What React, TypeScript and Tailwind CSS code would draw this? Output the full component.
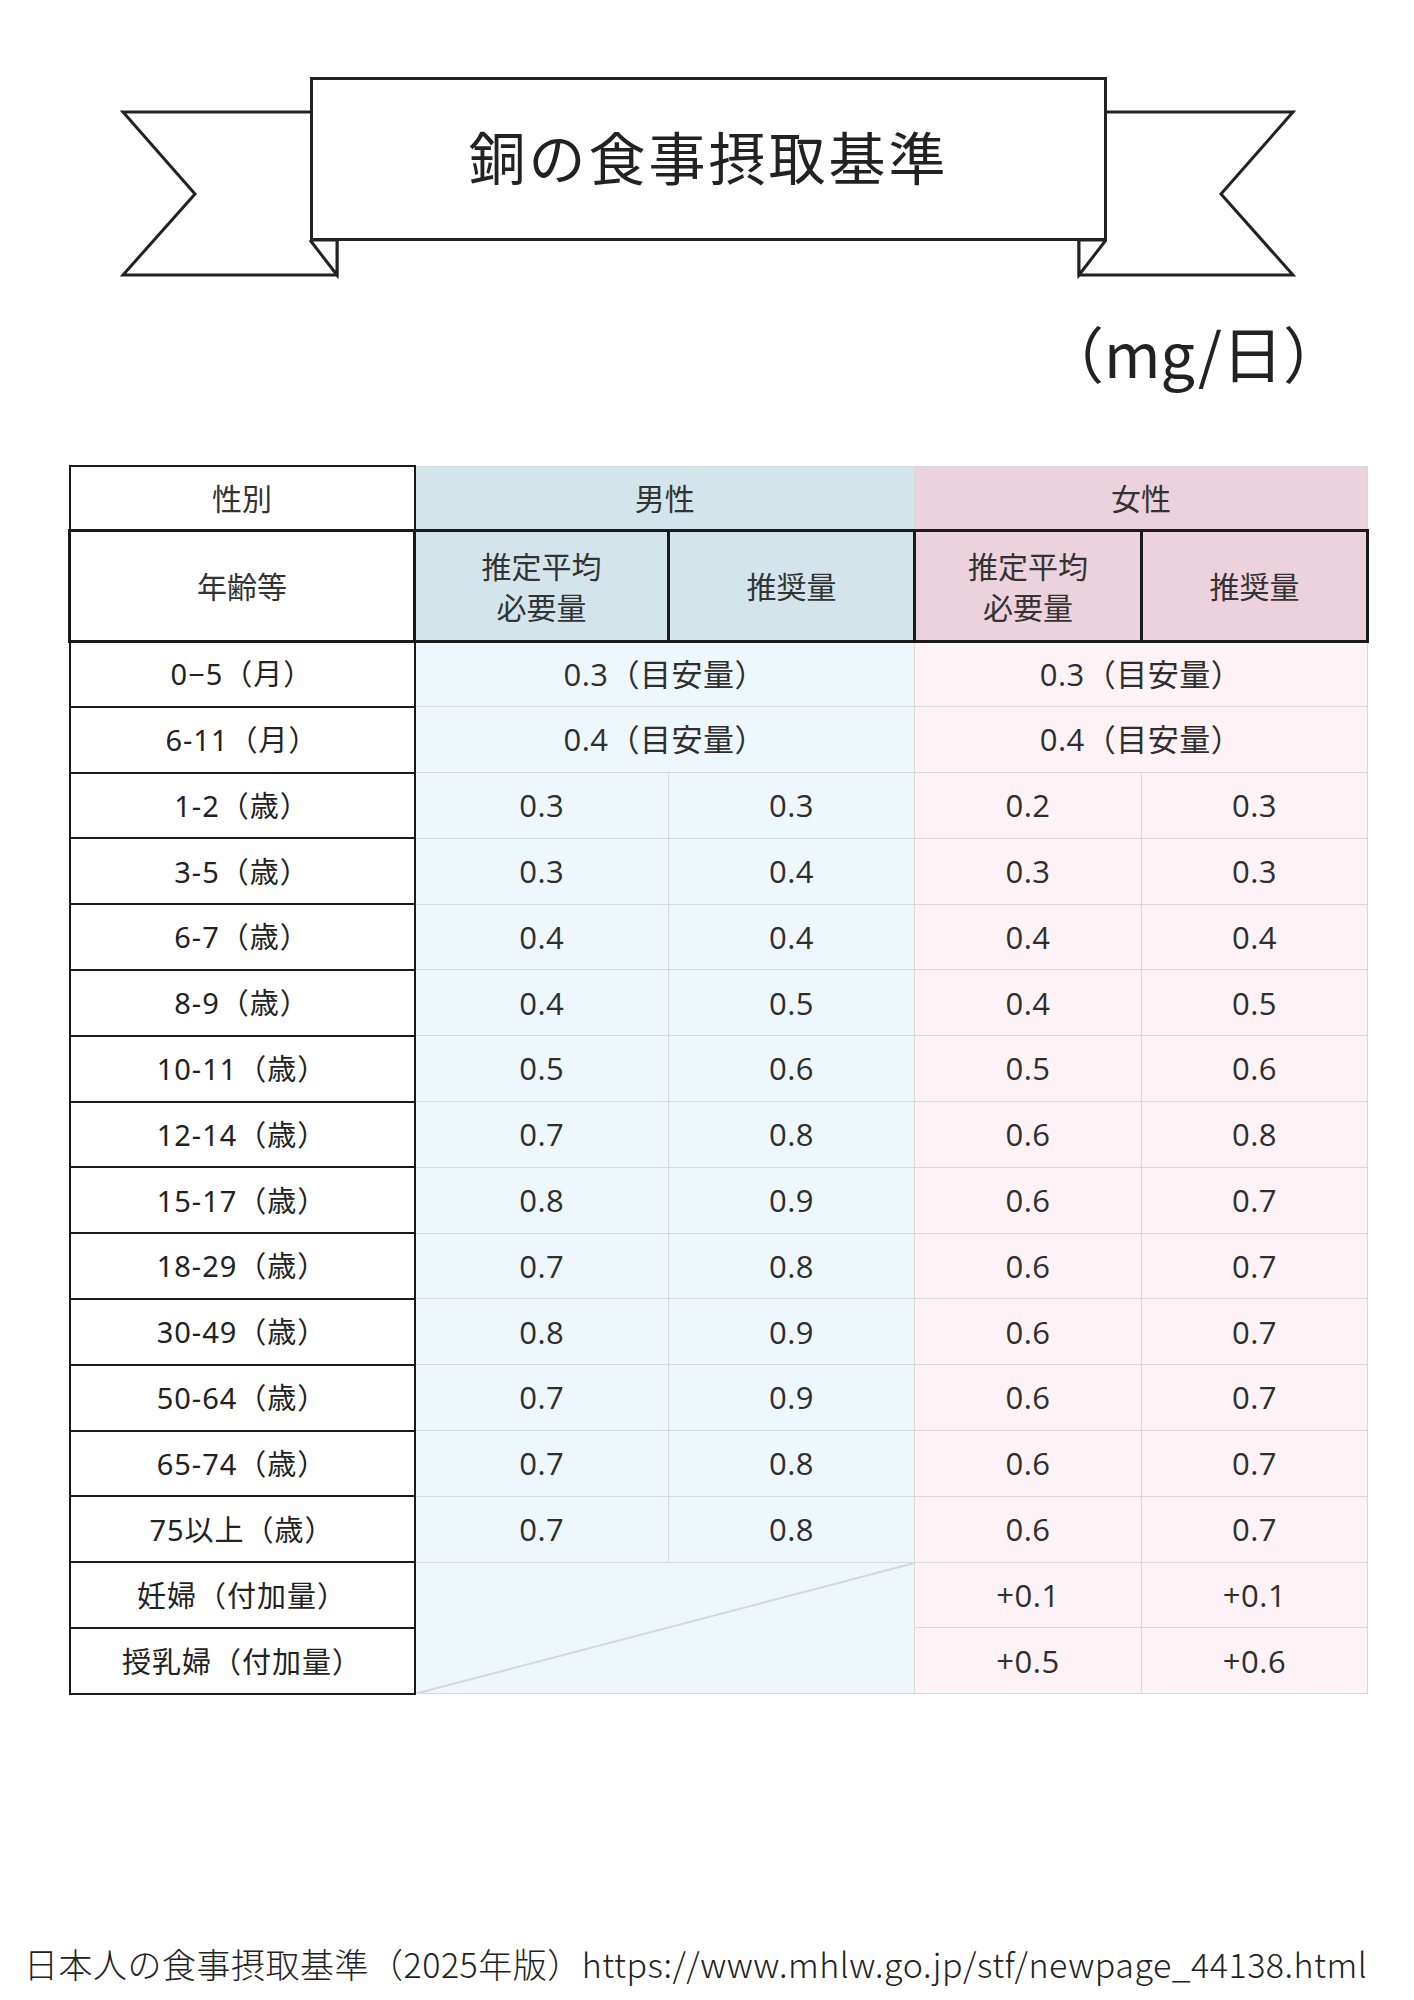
import React from 'react'

const jp = "font-['Noto_Sans_CJK_JP',sans-serif]"
const num = "font-['Open_Sans','Noto_Sans_CJK_JP',sans-serif]"

type Row = { label: string; male: string[]; female: string[] }

const rows: Row[] = [
  { label: '0−5（月）', male: ['0.3（目安量）'], female: ['0.3（目安量）'] },
  { label: '6-11（月）', male: ['0.4（目安量）'], female: ['0.4（目安量）'] },
  { label: '1-2（歳）', male: ['0.3', '0.3'], female: ['0.2', '0.3'] },
  { label: '3-5（歳）', male: ['0.3', '0.4'], female: ['0.3', '0.3'] },
  { label: '6-7（歳）', male: ['0.4', '0.4'], female: ['0.4', '0.4'] },
  { label: '8-9（歳）', male: ['0.4', '0.5'], female: ['0.4', '0.5'] },
  { label: '10-11（歳）', male: ['0.5', '0.6'], female: ['0.5', '0.6'] },
  { label: '12-14（歳）', male: ['0.7', '0.8'], female: ['0.6', '0.8'] },
  { label: '15-17（歳）', male: ['0.8', '0.9'], female: ['0.6', '0.7'] },
  { label: '18-29（歳）', male: ['0.7', '0.8'], female: ['0.6', '0.7'] },
  { label: '30-49（歳）', male: ['0.8', '0.9'], female: ['0.6', '0.7'] },
  { label: '50-64（歳）', male: ['0.7', '0.9'], female: ['0.6', '0.7'] },
  { label: '65-74（歳）', male: ['0.7', '0.8'], female: ['0.6', '0.7'] },
  { label: '75以上（歳）', male: ['0.7', '0.8'], female: ['0.6', '0.7'] },
]

const labelCell = `border-2 border-[#1a1a1a] bg-white text-center text-[29px] tracking-[1px] text-[#222] font-['Noto_Sans','Noto_Sans_CJK_JP',sans-serif]`
const maleCell = `border border-[#dadada] bg-[#eef8fc] text-center text-[31px] tracking-[0.5px] text-[#2e2e2e] ${num}`
const femaleCell = `border border-[#dadada] bg-[#fdf2f5] text-center text-[31px] tracking-[0.5px] text-[#2e2e2e] ${num}`
const headCell = `border-[3px] border-[#1a1a1a] text-center text-[30px] leading-[41px] text-[#333] font-normal ${jp}`

function Banner() {
  return (
    <div className="relative h-[285px] w-full">
      <svg className="absolute inset-0" width="1414" height="285" viewBox="0 0 1414 285">
        <g fill="white" stroke="#222" strokeWidth="3" strokeLinejoin="miter">
          <polygon points="123,112 330,112 337,240 337,275 123,275 195,194" />
          <polyline points="310,240 337,240 337,275 310,240" />
          <polygon points="1293,112 1086,112 1079,240 1079,275 1293,275 1221,194" />
          <polyline points="1106,240 1079,240 1079,275 1106,240" />
        </g>
      </svg>
      <div className="relative ml-[310px] top-[77px] flex h-[164px] w-[797px] items-center justify-center border-[3px] border-[#222] bg-white">
        <h1 className={`${jp} text-[57px] tracking-[3px] text-[#222] leading-none pb-[8px]`}>銅の食事摂取基準</h1>
      </div>
    </div>
  )
}

export default function App() {
  return (
    <div className="w-[1414px] h-[2000px] bg-white relative">
      <Banner />

      <div className="flex justify-end pr-[70px] mt-[29px]">
        <span className={`${jp} text-[61px] leading-[76px] text-[#222]`}>（mg/日）</span>
      </div>

      <table className="ml-[68px] mt-[75px] border-collapse table-fixed w-[1298px]">
        <colgroup>
          <col className="w-[345px]" />
          <col className="w-[254px]" />
          <col className="w-[246px]" />
          <col className="w-[227px]" />
          <col className="w-[226px]" />
        </colgroup>
        <thead>
          <tr className="h-[64px]">
            <th className={`border-2 border-[#1a1a1a] bg-white font-normal text-[30px] text-[#333] ${jp}`}>性別</th>
            <th colSpan={2} className={`border border-[#d6d6d6] bg-[#d3e5ea] font-normal text-[30px] text-[#333] ${jp}`}>男性</th>
            <th colSpan={2} className={`border border-[#d6d6d6] bg-[#ebd2dc] font-normal text-[30px] text-[#333] ${jp}`}>女性</th>
          </tr>
          <tr className="h-[111px]">
            <th className={`${headCell} bg-white`}>年齢等</th>
            <th className={`${headCell} bg-[#d3e5ea]`}>推定平均<br />必要量</th>
            <th className={`${headCell} bg-[#d3e5ea]`}>推奨量</th>
            <th className={`${headCell} bg-[#ebd2dc]`}>推定平均<br />必要量</th>
            <th className={`${headCell} bg-[#ebd2dc]`}>推奨量</th>
          </tr>
        </thead>
        <tbody>
          {rows.map((r) => (
            <tr key={r.label} className="h-[65.8px]">
              <td className={labelCell}>{r.label}</td>
              {r.male.length === 1 ? (
                <td colSpan={2} className={maleCell}>{r.male[0]}</td>
              ) : (
                r.male.map((v, i) => <td key={i} className={maleCell}>{v}</td>)
              )}
              {r.female.length === 1 ? (
                <td colSpan={2} className={femaleCell}>{r.female[0]}</td>
              ) : (
                r.female.map((v, i) => <td key={i} className={femaleCell}>{v}</td>)
              )}
            </tr>
          ))}
          <tr className="h-[65.8px]">
            <td className={`${labelCell} ${jp}`}>妊婦（付加量）</td>
            <td colSpan={2} rowSpan={2} className="relative border border-[#dadada] bg-[#eef8fc] p-0">
              <svg className="absolute inset-0 h-full w-full" preserveAspectRatio="none" viewBox="0 0 100 100">
                <line x1="0" y1="100" x2="100" y2="0" stroke="#d4d8dc" strokeWidth="2" vectorEffect="non-scaling-stroke" />
              </svg>
            </td>
            <td className={femaleCell}>+0.1</td>
            <td className={femaleCell}>+0.1</td>
          </tr>
          <tr className="h-[65.8px]">
            <td className={`${labelCell} ${jp}`}>授乳婦（付加量）</td>
            <td className={femaleCell}>+0.5</td>
            <td className={femaleCell}>+0.6</td>
          </tr>
        </tbody>
      </table>

      <p className={`absolute left-[24px] top-[1941px] ${jp} font-light text-[34px] tracking-[0.5px] leading-[46px] text-[#222] whitespace-nowrap`}>
        日本人の食事摂取基準（2025年版）https://www.mhlw.go.jp/stf/newpage_44138.html
      </p>
    </div>
  )
}
